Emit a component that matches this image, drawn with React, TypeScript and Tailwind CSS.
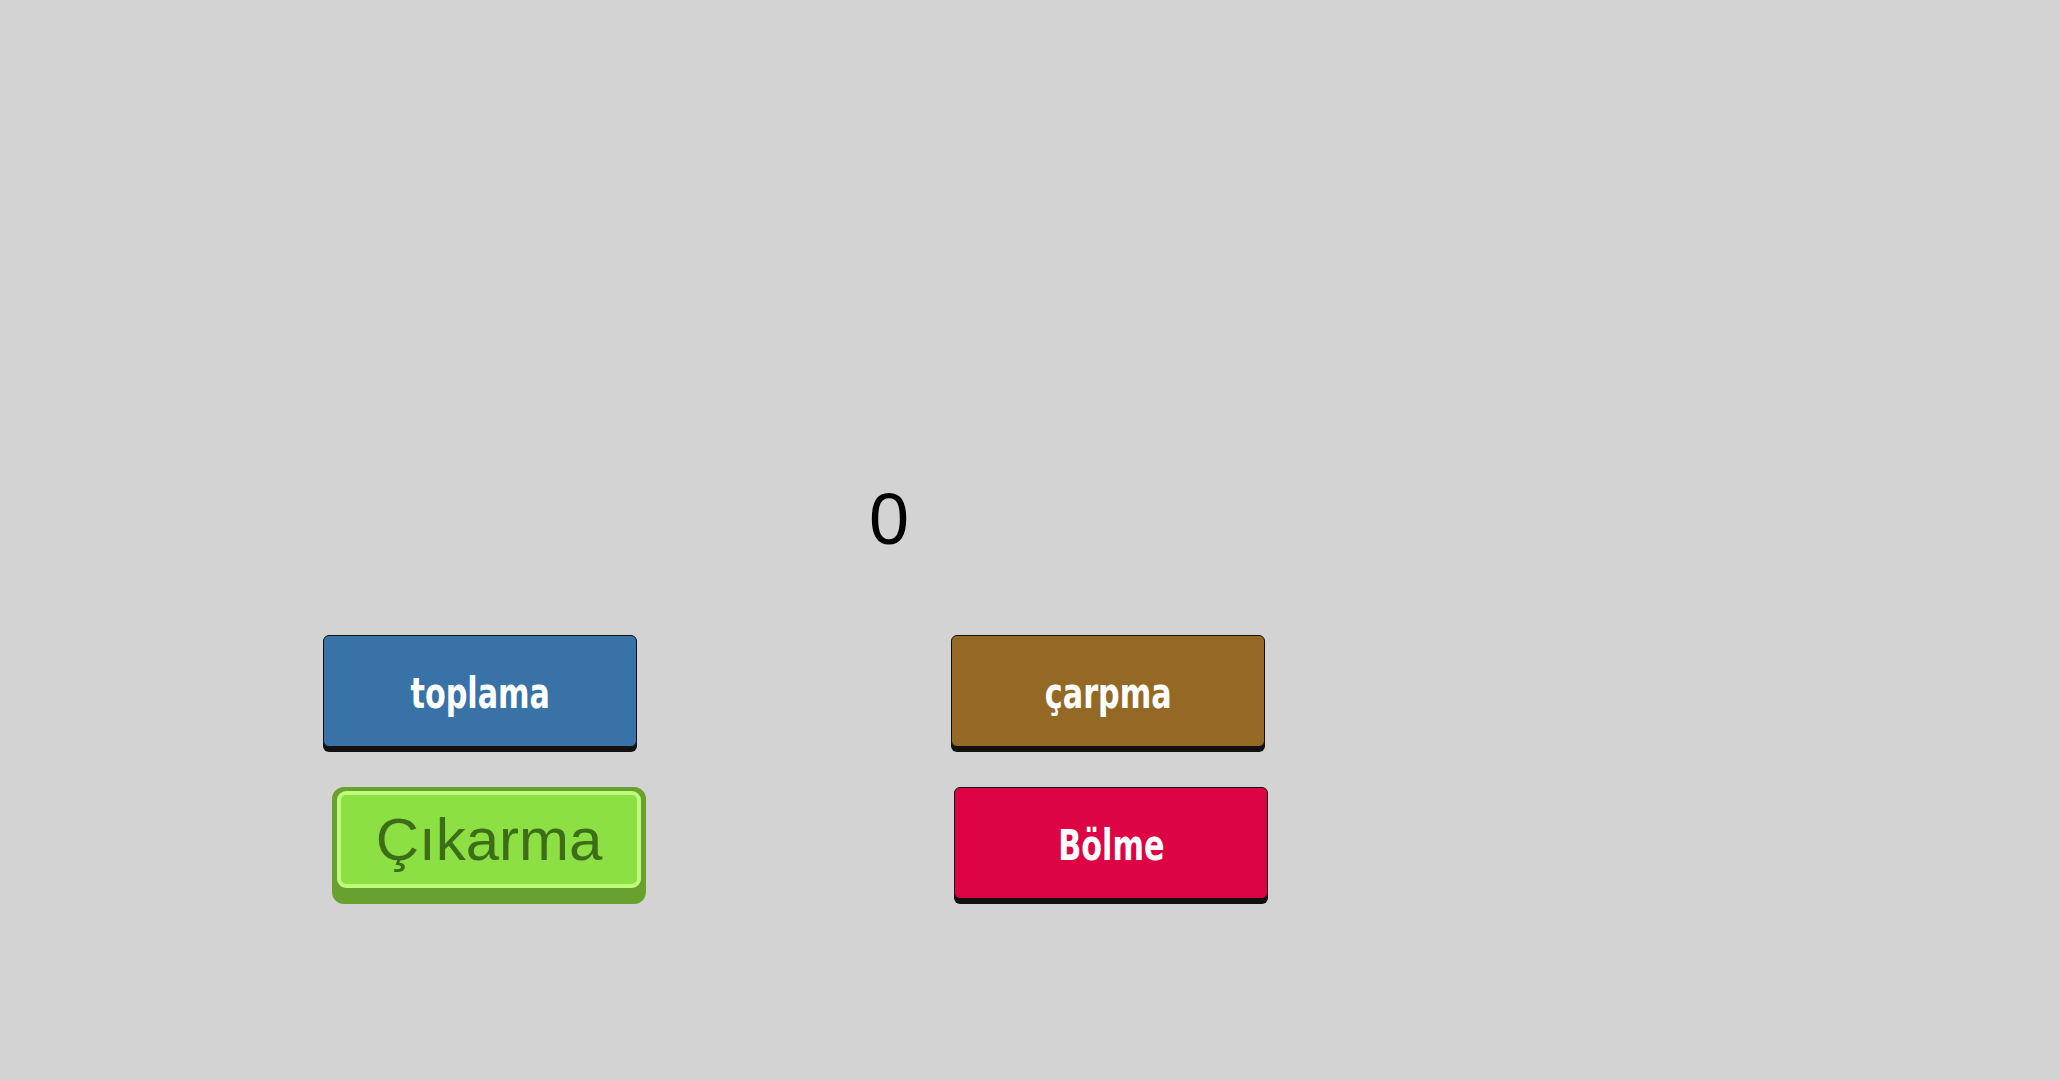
import React from 'react';

const labelFont = "font-['Liberation_Sans_Narrow','DejaVu_Sans_Condensed',sans-serif] font-bold";

function DarkButton({ label, color }: { label: string; color: string }) {
  return (
    <button
      className={`flex h-[112px] w-[314px] items-center justify-center rounded-[6px] border border-[#111] shadow-[0_5px_0_#111] ${color}`}
    >
      <span className={`${labelFont} inline-block scale-x-[0.8] pt-[6px] text-[42px] leading-none text-white`}>
        {label}
      </span>
    </button>
  );
}

export default function App() {
  return (
    <div className="min-h-screen bg-[#d3d3d3] font-['Liberation_Sans',Arial,sans-serif]">
      {/* Result */}
      <div className="pl-[869px] pt-[483px] text-[72px] leading-[72px] text-black">0</div>

      {/* Operations */}
      <div className="mt-[80px] flex flex-col gap-[40px]">
        <div className="flex gap-[314px] pl-[323px]">
          <DarkButton label="toplama" color="bg-[#3872a7]" />
          <DarkButton label="çarpma" color="bg-[#946926]" />
        </div>
        <div className="flex items-start gap-[308px] pl-[332px]">
          <button className="h-[117px] w-[314px] rounded-[12px] bg-[#68a12e] px-[5px] pb-[16px] pt-[4px]">
            <span className="flex h-full w-full items-center justify-center rounded-[9px] border-[4px] border-[#bdfb7c] bg-[#8de044] text-[60px] leading-none text-[#3e6d18]">
              Çıkarma
            </span>
          </button>
          <DarkButton label="Bölme" color="bg-[#dc0445]" />
        </div>
      </div>
    </div>
  );
}
